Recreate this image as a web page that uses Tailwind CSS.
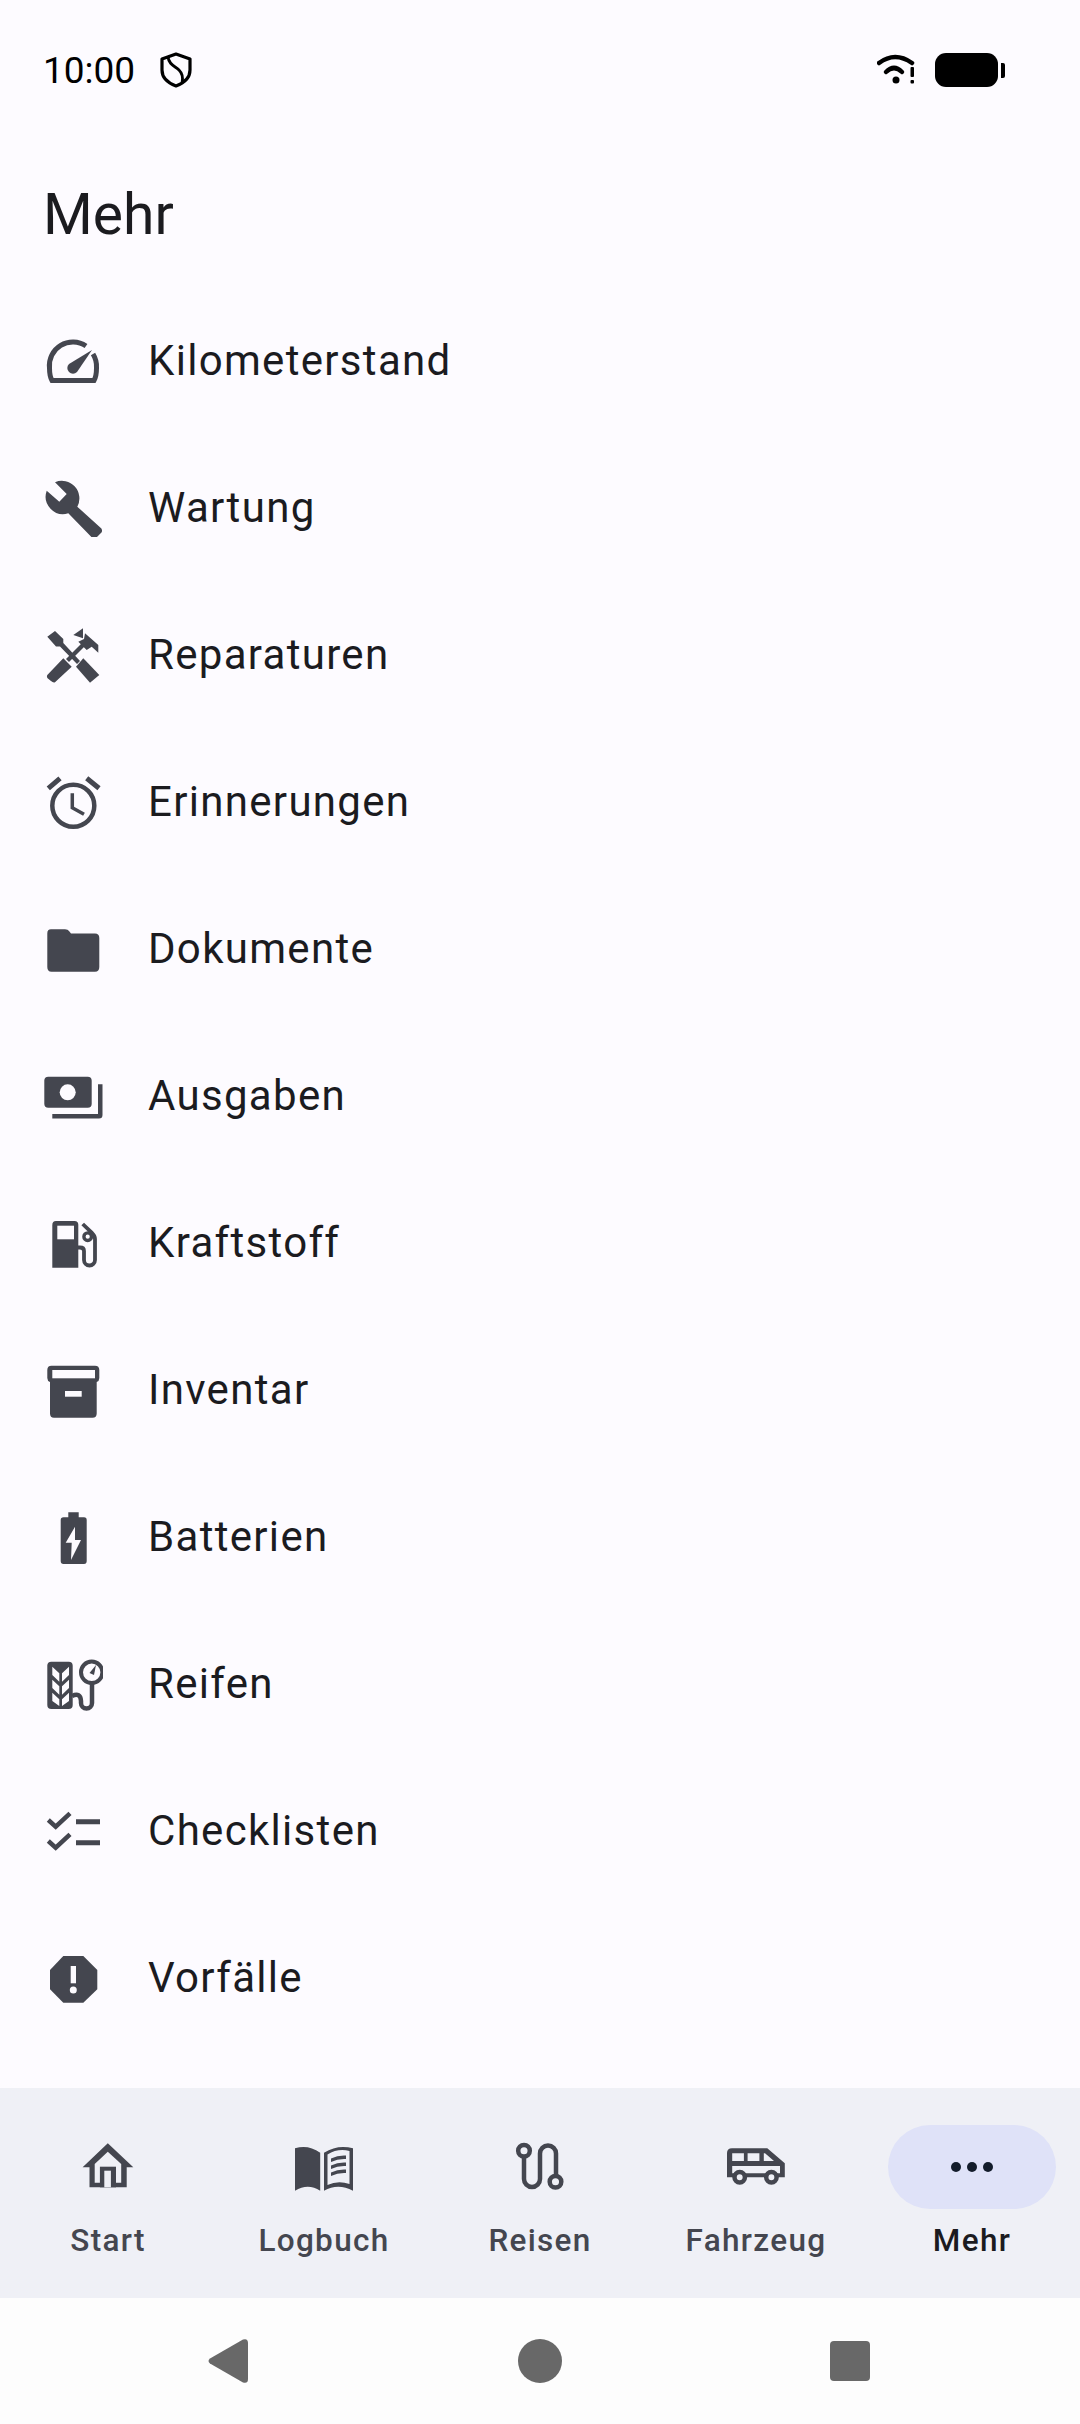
<!DOCTYPE html>
<html lang="de">
<head>
  <meta charset="UTF-8" />
  <meta name="viewport" content="width=device-width, initial-scale=1.0"/>
  <title>Mehr</title>
  <script src="https://cdn.jsdelivr.net/npm/@tailwindcss/browser@4"></script>
</head>
<body class="bg-[#fdfbff] text-[#1b1b1f] font-['Roboto',sans-serif]">
  <div class="w-[1080px] h-[2424px] flex flex-col overflow-hidden">

    <!-- STATUS BAR -->
    <div class="h-[140px] shrink-0 flex items-center justify-between pl-[43px] pr-[75px] text-black">
      <div class="flex items-center gap-[23px]">
        <span class="text-[37px] leading-none">10:00</span>
        <svg class="w-[36px] h-[36px]" viewBox="0 0 36 36" fill="none" stroke="#000" stroke-width="3.2"><path d="M18 2 L32 7 V18 C32 26 26 31 18 34 C10 31 4 26 4 18 V7 Z" stroke-linejoin="round"/><path d="M10 5 C11 13 17 14 21 18 C25 22 25 27 24 31" stroke-width="2.8"/></svg>
      </div>
      <div class="flex items-center gap-[18px]">
        <svg class="w-[40px] h-[32px]" viewBox="0 0 40 32" fill="#000"><path d="M2 9 Q18 -3 35 9" fill="none" stroke="#000" stroke-width="4.5" stroke-linecap="round"/><path d="M9 18 Q17 10 25 18" fill="none" stroke="#000" stroke-width="4.5" stroke-linecap="round"/><circle cx="19" cy="26" r="3.5"/><rect x="33.5" y="13" width="3.5" height="10" rx="1"/><rect x="33.5" y="26" width="3.5" height="3.5" rx="1"/></svg>
        <div class="flex items-center gap-[3px]">
          <div class="w-[63px] h-[34px] bg-black rounded-[11px]"></div>
          <div class="w-[4px] h-[15px] bg-black rounded-r-[2px]"></div>
        </div>
      </div>
    </div>

    <!-- TITLE -->
    <h1 class="h-[146px] shrink-0 flex items-center pl-[43px] pt-[3px] text-[57px] font-normal leading-none text-[#1b1b1f]">Mehr</h1>

    <!-- LIST -->
    <div class="flex-1 flex flex-col">
      <div class="h-[147px] flex items-center pl-[43px] gap-[45px]">
        <svg class="w-[60px] h-[60px]" viewBox="0 0 60 60" fill="#44464f"><path d="M43 16 A23.5 23.5 0 0 0 6.5 38 C6.5 42 7 47 9 50.5 H51 C53 47 53.5 42 53.5 38 A23.5 23.5 0 0 0 50 24" fill="none" stroke="#44464f" stroke-width="5"/><path d="M49 20 L34 42 A5.5 5.5 0 1 1 26 34 Z"/></svg>
        <span class="pt-[3px] text-[42px] tracking-[1.31px] leading-none">Kilometerstand</span>
      </div>
      <div class="h-[147px] flex items-center pl-[43px] gap-[45px]">
        <svg class="w-[60px] h-[60px]" viewBox="0 0 60 60" fill="#44464f"><path d="M12 5.3 L23.7 17 L16.3 24.7 L3.7 13.7 A17.5 17.5 0 0 0 25.3 36.3 L48.7 60.3 Q51 62 54 60 L58.7 55.3 Q60 52.3 57 50.3 L34.3 29.7 A17.5 17.5 0 0 0 12 5.3 Z"/></svg>
        <span class="pt-[3px] text-[42px] tracking-[1.31px] leading-none">Wartung</span>
      </div>
      <div class="h-[147px] flex items-center pl-[43px] gap-[45px]">
        <svg class="w-[60px] h-[60px]" viewBox="0 0 60 60" fill="#44464f"><path d="M4.3 12.7 L12 7 L20.3 15 V19 L37 37 L34 40 L17 22.5 H13 Z"/><path d="M40.3 34.3 L56.3 51 L47 58.7 L33 42.7 Z"/><path d="M4.3 51 L20.3 34.3 L28.7 42.7 L12 58.3 Q10 59 8 57 L4.3 54 Q3.5 52 4.3 51 Z"/><path d="M23 35 L39 19 L42 22 L26 38 Z"/><path d="M30.3 11 L40 4.3 V14.3 Z"/><path d="M42 9.3 L55.3 21 V28.7 L48.7 22.7 L43.7 26 L35.3 17.7 L41 15 Z"/></svg>
        <span class="pt-[3px] text-[42px] tracking-[1.31px] leading-none">Reparaturen</span>
      </div>
      <div class="h-[147px] flex items-center pl-[43px] gap-[45px]">
        <svg class="w-[60px] h-[60px]" viewBox="0 0 60 60" fill="none" stroke="#44464f" stroke-width="4.5"><circle cx="30.3" cy="34.7" r="21"/><path d="M29.3 22.3 V36.7 L41 43.3" stroke-width="3.5"/><path d="M5.3 17.3 L17 7.3 M43.7 7.3 L56 17.3" stroke-width="5"/></svg>
        <span class="pt-[3px] text-[42px] tracking-[1.31px] leading-none">Erinnerungen</span>
      </div>
      <div class="h-[147px] flex items-center pl-[43px] gap-[45px]">
        <svg class="w-[60px] h-[60px]" viewBox="0 0 60 60" fill="#44464f"><path d="M8 11.3 H22 Q25 11.3 26 13 L28 15.5 H52 Q56.3 15.5 56.3 20 V49 Q56.3 53.7 52 53.7 H8.5 Q4.3 53.7 4.3 49 V15.5 Q4.3 11.3 8 11.3 Z"/></svg>
        <span class="pt-[3px] text-[42px] tracking-[1.31px] leading-none">Dokumente</span>
      </div>
      <div class="h-[147px] flex items-center pl-[43px] gap-[45px]">
        <svg class="w-[60px] h-[60px]" viewBox="0 0 60 60" fill="#44464f"><rect x="1.3" y="11.7" width="47.4" height="31" rx="4"/><circle cx="24.7" cy="27.3" r="8" fill="#fdfbff"/><path d="M55 19.3 H59.5 V50 Q59.5 53.5 56 53.5 H9.3 V49 H55 Z"/></svg>
        <span class="pt-[3px] text-[42px] tracking-[1.31px] leading-none">Ausgaben</span>
      </div>
      <div class="h-[147px] flex items-center pl-[43px] gap-[45px]">
        <svg class="w-[60px] h-[60px]" viewBox="0 0 60 60" fill="#44464f"><path d="M13 9 H31.5 Q35.3 9 35.3 13 V55.7 H9.3 V13 Q9.3 9 13 9 Z"/><rect x="14.3" y="13.7" width="16.7" height="13.6" fill="#fdfbff"/><path d="M39.7 12 L48.7 20.7 Q52 24 52 27 V48 A5.5 5.5 0 0 1 41 48 V39 Q41 35.5 37 35.5 H35" fill="none" stroke="#44464f" stroke-width="3.8"/><circle cx="44.7" cy="24.7" r="3.8" fill="#fdfbff" stroke="#44464f" stroke-width="3.4"/></svg>
        <span class="pt-[3px] text-[42px] tracking-[1.31px] leading-none">Kraftstoff</span>
      </div>
      <div class="h-[147px] flex items-center pl-[43px] gap-[45px]">
        <svg class="w-[60px] h-[60px]" viewBox="0 0 60 60" fill="#44464f"><path d="M8.5 6.7 H52 Q56.3 6.7 56.3 11 V19 Q56.3 22 53.7 23 V54.5 Q53.7 58.7 49.5 58.7 H11 Q7 58.7 7 54.5 V23 Q4.3 22 4.3 19 V11 Q4.3 6.7 8.5 6.7 Z"/><rect x="9.3" y="11" width="42.7" height="8.3" fill="#fdfbff"/><rect x="22" y="32" width="16.7" height="5.7" fill="#fdfbff"/></svg>
        <span class="pt-[3px] text-[42px] tracking-[1.31px] leading-none">Inventar</span>
      </div>
      <div class="h-[147px] flex items-center pl-[43px] gap-[45px]">
        <svg class="w-[60px] h-[60px]" viewBox="0 0 60 60" fill="#44464f"><path d="M25.3 6.3 H35.7 V11.3 H41 Q43.7 11.3 43.7 14 V55 Q43.7 58 41 58 H20.5 Q17.7 58 17.7 55 V14 Q17.7 11.3 20.5 11.3 H25.3 Z"/><path d="M32 20.7 L22.7 36.7 H28.7 L28 54 L38 34 H32 Z" fill="#fdfbff"/></svg>
        <span class="pt-[3px] text-[42px] tracking-[1.31px] leading-none">Batterien</span>
      </div>
      <div class="h-[147px] flex items-center pl-[43px] gap-[45px]">
        <svg class="w-[60px] h-[60px]" viewBox="0 0 60 60" fill="#44464f"><rect x="4.3" y="8.7" width="25.4" height="47.3" rx="4"/><path d="M9.3 13.7 L16.3 20.3 V28.7 L9.3 22 Z M26 13.7 L19 20.3 V28.7 L26 22 Z M9.3 26.7 L16.3 33.3 V41.7 L9.3 35 Z M26 26.7 L19 33.3 V41.7 L26 35 Z M9.3 39.7 L16.3 46.3 V53 L9.3 48 Z M26 39.7 L19 46.3 V53 L26 48 Z" fill="#fdfbff"/><path d="M29 43 Q37.5 39 38 48 V50 A5.5 5.5 0 0 0 49 50 V31" fill="none" stroke="#44464f" stroke-width="4.5"/><circle cx="48.7" cy="19.3" r="10.7" fill="none" stroke="#44464f" stroke-width="4"/><path d="M53 12 L51 22 L46.5 20 Z"/></svg>
        <span class="pt-[3px] text-[42px] tracking-[1.31px] leading-none">Reifen</span>
      </div>
      <div class="h-[147px] flex items-center pl-[43px] gap-[45px]">
        <svg class="w-[60px] h-[60px]" viewBox="0 0 60 60" fill="none" stroke="#44464f" stroke-width="4.5"><path d="M5.3 20 L12.7 26.7 L27 13.3 M5.3 41 L12.7 47.7 L27 34.3"/><path d="M33 21.7 H57 M33 42.7 H57" stroke-width="5"/></svg>
        <span class="pt-[3px] text-[42px] tracking-[1.31px] leading-none">Checklisten</span>
      </div>
      <div class="h-[147px] flex items-center pl-[43px] gap-[45px]">
        <svg class="w-[60px] h-[60px]" viewBox="0 0 60 60" fill="#44464f"><path d="M20.3 9 H40.3 L54.3 23 V42.3 L40.3 55.7 H20.3 L7 42.3 V23 Z"/><rect x="27.7" y="19" width="5.3" height="17.3" fill="#fdfbff"/><circle cx="30.3" cy="43" r="3.5" fill="#fdfbff"/></svg>
        <span class="pt-[3px] text-[42px] tracking-[1.31px] leading-none">Vorfälle</span>
      </div>
    </div>

    <!-- BOTTOM NAV -->
    <div class="h-[210px] shrink-0 bg-[#eff0f6] grid grid-cols-5 text-[#44464f]">
      <div class="flex flex-col items-center pt-[37px]">
        <div class="w-[168px] h-[84px] flex items-center justify-center">
          <svg class="w-[60px] h-[60px]" viewBox="0 0 60 60" fill="#44464f"><path d="M29.8 6.3 L55.3 30.3 H48.7 V50.3 H11.5 V30.3 H4.6 Z"/><path d="M29.8 14.7 L43.2 27 V45.7 H16.7 V27 Z" fill="#eff0f6"/><rect x="21.9" y="29.7" width="16.1" height="20.6"/><rect x="26.3" y="33.7" width="6.6" height="16.6" fill="#eff0f6"/></svg>
        </div>
        <span class="mt-[16px] text-[31.5px] leading-none tracking-[1.31px] font-medium">Start</span>
      </div>
      <div class="flex flex-col items-center pt-[37px]">
        <div class="w-[168px] h-[84px] flex items-center justify-center">
          <svg class="w-[60px] h-[60px]" viewBox="0 0 60 60" fill="#44464f"><path d="M1 11.3 Q14 7 26.2 15.7 V53.7 Q14 46 1 53.7 Z"/><path d="M30 15.7 Q44 7 59 11.3 V53.7 Q44 46 30 53.7 Z M33.5 17.5 V48 Q44 43 55.5 47 V14 Q44 11 33.5 17.5 Z" fill-rule="evenodd"/><path d="M37 21.5 Q44 18 52 18.5 V22 Q44 21.5 37 25 Z M37 28.5 Q44 25 52 25.5 V29 Q44 28.5 37 32 Z M37 35.5 Q44 32 52 32.5 V36 Q44 35.5 37 39 Z"/></svg>
        </div>
        <span class="mt-[16px] text-[31.5px] leading-none tracking-[1.31px] font-medium">Logbuch</span>
      </div>
      <div class="flex flex-col items-center pt-[37px]">
        <div class="w-[168px] h-[84px] flex items-center justify-center">
          <svg class="w-[60px] h-[60px]" viewBox="0 0 60 60" fill="none" stroke="#44464f" stroke-width="4.5"><circle cx="14" cy="13.7" r="5.8"/><circle cx="45.5" cy="44.7" r="5.8"/><path d="M14 19.5 V42 A8 8 0 0 0 30 42 V16.5 A8 8 0 0 1 46 16.5 V39"/></svg>
        </div>
        <span class="mt-[16px] text-[31.5px] leading-none tracking-[1.31px] font-medium">Reisen</span>
      </div>
      <div class="flex flex-col items-center pt-[37px]">
        <div class="w-[168px] h-[84px] flex items-center justify-center">
          <svg class="w-[60px] h-[60px]" viewBox="0 0 60 60" fill="#44464f"><path d="M6 11.3 H41.3 L58.8 26.3 V40.3 H1 V16 Q1 11.3 6 11.3 Z M6.2 16.3 V24 H17.9 V16.3 Z M21.6 16.3 V24 H33.4 V16.3 Z M37.8 16.3 V24 H48 L39 16.3 Z M6.2 29 V36.3 H54 V29 Z" fill-rule="evenodd"/><circle cx="13.7" cy="40.3" r="5.2" fill="#eff0f6" stroke="#44464f" stroke-width="4.5"/><circle cx="45.4" cy="40.3" r="5.2" fill="#eff0f6" stroke="#44464f" stroke-width="4.5"/></svg>
        </div>
        <span class="mt-[16px] text-[31.5px] leading-none tracking-[1.31px] font-medium">Fahrzeug</span>
      </div>
      <div class="flex flex-col items-center pt-[37px]">
        <div class="w-[168px] h-[84px] rounded-full bg-[#dfe2f8] flex items-center justify-center gap-[6px]">
          <div class="w-[10px] h-[10px] rounded-full bg-[#131c2b]"></div>
          <div class="w-[10px] h-[10px] rounded-full bg-[#131c2b]"></div>
          <div class="w-[10px] h-[10px] rounded-full bg-[#131c2b]"></div>
        </div>
        <span class="mt-[16px] text-[31.5px] leading-none tracking-[1.31px] font-medium text-[#1b1b1f]">Mehr</span>
      </div>
    </div>

    <!-- ANDROID NAV -->
    <div class="h-[126px] shrink-0 bg-[#fdfdfd] flex items-center justify-center gap-[268px]">
      <svg class="w-[40px] h-[44px] -ml-[2px] mr-[2px]" viewBox="0 0 40 44" fill="#686868"><path d="M2 19.5 L35 0.5 Q40 -1 40 4 V40 Q40 45 35 43.5 L2 24.5 Q-1 22 2 19.5 Z"/></svg>
      <div class="w-[44px] h-[44px] rounded-full bg-[#686868]"></div>
      <div class="w-[40px] h-[40px] rounded-[4px] bg-[#686868]"></div>
    </div>
  </div>
</body>
</html>
